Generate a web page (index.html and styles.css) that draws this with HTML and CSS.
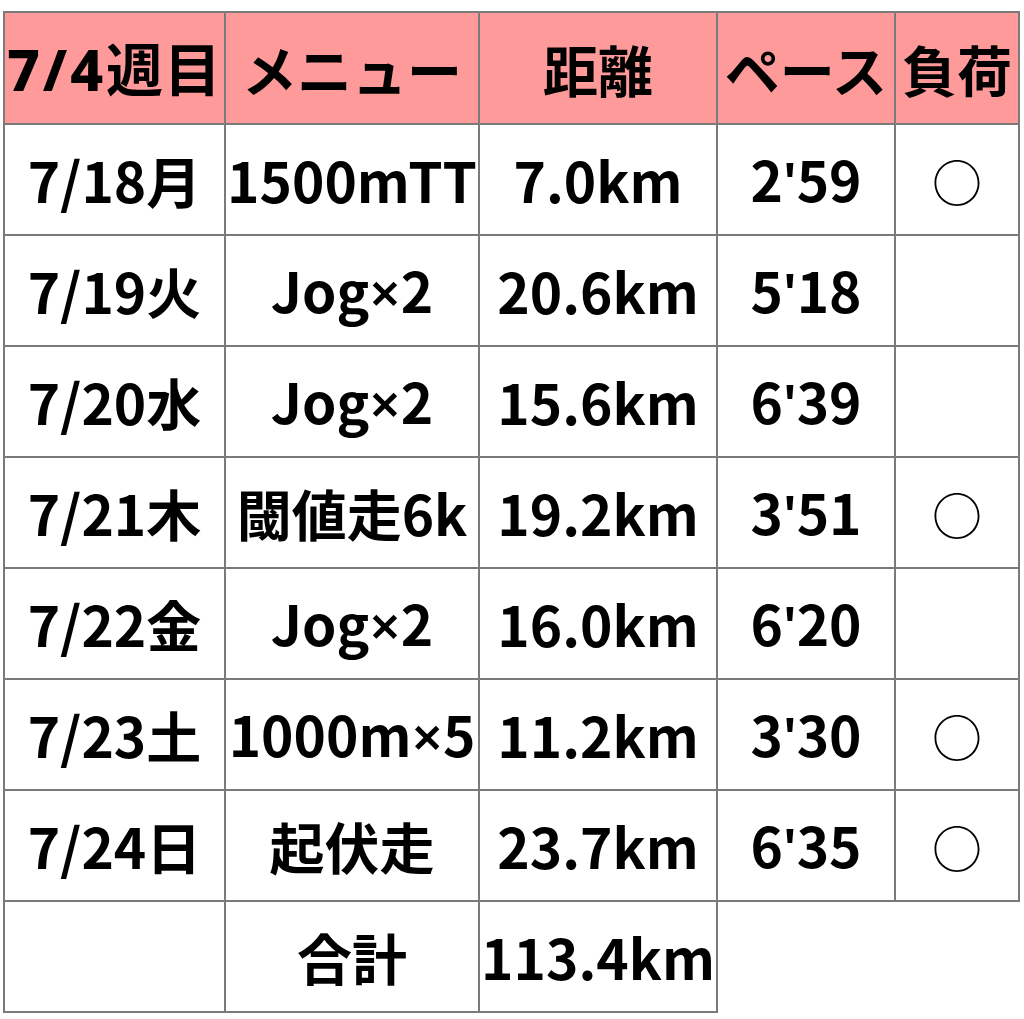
FILE: index.html
```html
<!DOCTYPE html>
<html lang="ja">
<head>
<meta charset="utf-8">
<link rel="stylesheet" href="styles.css">
</head>
<body>
<table class="log">
  <colgroup>
    <col class="c1"><col class="c2"><col class="c3"><col class="c4"><col class="c5">
  </colgroup>
  <thead>
    <tr><th class="wk"><span class="hlat">7/4</span>週目</th><th>メニュー</th><th>距離</th><th>ペース</th><th>負荷</th></tr>
  </thead>
  <tbody>
    <tr><td>7/18月</td><td>1500mTT</td><td>7.0km</td><td>2<span class="lat">'</span>59</td><td class="mark">○</td></tr>
    <tr><td>7/19火</td><td>Jog<span class="lat">×</span>2</td><td>20.6km</td><td>5<span class="lat">'</span>18</td><td class="mark"></td></tr>
    <tr><td>7/20水</td><td>Jog<span class="lat">×</span>2</td><td>15.6km</td><td>6<span class="lat">'</span>39</td><td class="mark"></td></tr>
    <tr><td>7/21木</td><td>閾値走6k</td><td>19.2km</td><td>3<span class="lat">'</span>51</td><td class="mark">○</td></tr>
    <tr><td>7/22金</td><td>Jog<span class="lat">×</span>2</td><td>16.0km</td><td>6<span class="lat">'</span>20</td><td class="mark"></td></tr>
    <tr><td>7/23土</td><td>1000m<span class="lat">×</span>5</td><td>11.2km</td><td>3<span class="lat">'</span>30</td><td class="mark">○</td></tr>
    <tr><td>7/24日</td><td>起伏走</td><td>23.7km</td><td>6<span class="lat">'</span>35</td><td class="mark">○</td></tr>
    <tr><td></td><td>合計</td><td>113.4km</td></tr>
  </tbody>
</table>
</body>
</html>
```

FILE: styles.css
```css
html, body {
  margin: 0;
  padding: 0;
  background: #ffffff;
}
body {
  padding: 11px 0 0 3px;
  font-family: "Noto Sans CJK JP", "Noto Sans", sans-serif;
  color: #000;
}
.log {
  border-collapse: collapse;
  table-layout: fixed;
  width: 1017px;
}
.c1 { width: 221px; }
.c2 { width: 254px; }
.c3 { width: 238px; }
.c4 { width: 178px; }
.c5 { width: 124px; }
.log th, .log td {
  border: 2px solid #7a7a7a;
  padding: 0;
  height: 109px;
  text-align: center;
  vertical-align: middle;
  white-space: nowrap;
  font-size: 55px;
  line-height: 1;
}
.log th {
  background: #ff9a9a;
  font-weight: 700;
  height: 110px;
}
.log th.wk {
  font-size: 57px;
  letter-spacing: 1px;
}
.hlat {
  font-family: "Noto Sans", sans-serif;
  font-weight: 800;
  letter-spacing: 3px;
}
.log td {
  font-weight: 700;
}
.lat {
  font-family: "Noto Sans", sans-serif;
  font-weight: 600;
}
.log td.mark {
  font-weight: 400;
  font-size: 50px;
}
```
